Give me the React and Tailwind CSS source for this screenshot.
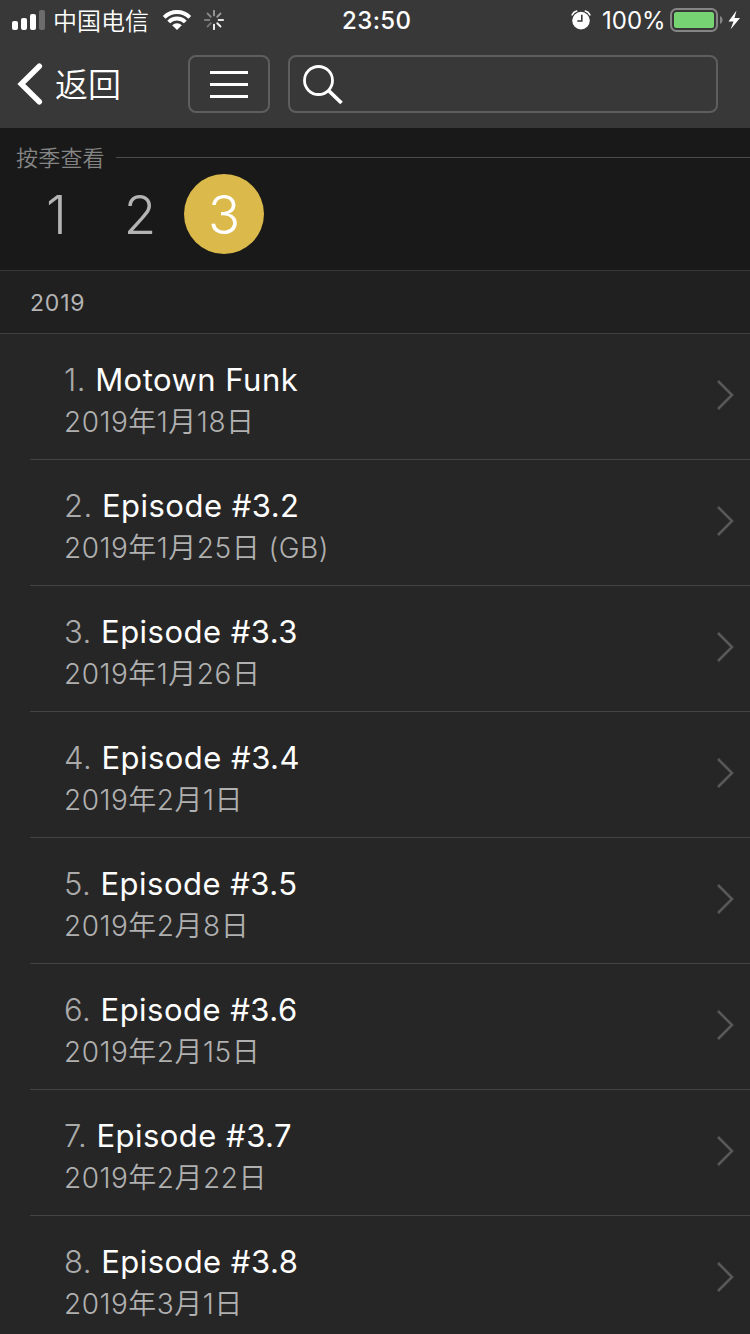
const episodes = [
  { title: 'Motown Funk', date: '2019年1月18日' },
  { title: 'Episode #3.2', date: '2019年1月25日 (GB)' },
  { title: 'Episode #3.3', date: '2019年1月26日' },
  { title: 'Episode #3.4', date: '2019年2月1日' },
  { title: 'Episode #3.5', date: '2019年2月8日' },
  { title: 'Episode #3.6', date: '2019年2月15日' },
  { title: 'Episode #3.7', date: '2019年2月22日' },
  { title: 'Episode #3.8', date: '2019年3月1日' },
];

const spokes = [
  [0, 0.5], [45, 0.5], [90, 0.85], [135, 0.95], [180, 1], [225, 0.3], [270, 0.35], [315, 0.4],
];

function StatusBar() {
  return (
    <div className="flex h-10 items-center text-white">
      <svg className="ml-[12px] shrink-0" width="34" height="20" viewBox="0 0 34 20" fill="#fff">
        <rect x="0" y="11" width="6" height="9" rx="2" />
        <rect x="9" y="8" width="6" height="12" rx="2" />
        <rect x="18" y="4" width="6" height="16" rx="2" />
        <rect x="27" y="0" width="6" height="20" rx="2" fill="#6c6c6c" />
      </svg>
      <span className="ml-[7px] w-[97px] pt-[3px] text-[24px] leading-none font-[350] whitespace-nowrap">中国电信</span>
      <svg className="ml-[12px] shrink-0" width="30" height="22" viewBox="0 0 30 22">
        <g fill="none" stroke="#fff" strokeWidth="3.9">
          <path d="M2.2 8.4a18 18 0 0 1 25.6 0" />
          <path d="M6.7 13a11.6 11.6 0 0 1 16.6 0" />
        </g>
        <path d="M15 21l-4.8-4.7a6.8 6.8 0 0 1 9.6 0z" fill="#fff" />
      </svg>
      <svg className="ml-[12px] shrink-0" width="20" height="20" viewBox="0 0 20 20">
        {spokes.map(([angle, opacity]) => (
          <path key={angle} d="M10 5.4V0.8" stroke="#fff" strokeWidth="1.8" strokeLinecap="round" opacity={opacity} transform={`rotate(${angle} 10 10)`} />
        ))}
      </svg>
      <span className="ml-[118px] w-[70px] pt-[2px] text-[24px] leading-none font-medium tracking-[0.4px]">23:50</span>
      <svg className="ml-[159px] shrink-0" width="20" height="20" viewBox="0 0 20 20">
        <circle cx="10" cy="10.6" r="8.8" fill="#fff" />
        <path d="M1.2 4.8C2 2.8 3.5 1.5 5.6 1M18.8 4.8C18 2.8 16.5 1.5 14.4 1" fill="none" stroke="#fff" strokeWidth="1.7" strokeLinecap="round" />
        <path d="M10.800 4.700V11H6.300" fill="none" stroke="#383838" strokeWidth="1.6" />
      </svg>
      <span className="ml-[11px] w-[64px] pt-[2px] text-[24px] leading-none">100%</span>
      <svg className="ml-[4px] shrink-0" width="72" height="24" viewBox="0 0 72 24">
        <rect x="1" y="1" width="46" height="22" rx="5.500" fill="none" stroke="#858585" strokeWidth="2" />
        <rect x="4" y="4" width="40" height="16" rx="2.500" fill="#76d572" />
        <path d="M50 8c3.500 1.500 3.500 6.500 0 8z" fill="#858585" />
        <path d="M66.500 2.500L58.500 13.500h5l-3 8 9.500-11.500h-5.500z" fill="#fff" />
      </svg>
    </div>
  );
}

function NavBar() {
  return (
    <div className="flex h-[88px] items-start pt-[15px]">
      <div className="flex h-[58px] w-[188px] items-center pl-[17px] text-white">
        <svg className="shrink-0" width="26" height="42" viewBox="0 0 26 42" fill="none" stroke="#fff" strokeWidth="5.500" strokeLinecap="round" strokeLinejoin="miter">
          <path d="M22.300 3.200L4.300 21L22.300 38.800" />
        </svg>
        <span className="ml-[12px] pt-[2px] text-[33px] leading-none font-[350] whitespace-nowrap">返回</span>
      </div>
      <div className="flex h-[58px] w-[82px] items-center justify-center rounded-[8px] border-2 border-[#5e5e5e]">
        <div className="flex w-[38px] flex-col gap-[9px]">
          <div className="h-[3px] bg-white" />
          <div className="h-[3px] bg-white" />
          <div className="h-[3px] bg-white" />
        </div>
      </div>
      <div className="ml-[18px] flex h-[58px] w-[430px] items-center rounded-[8px] border-2 border-[#5e5e5e] pl-[12px]">
        <svg width="42" height="42" viewBox="0 0 42 42" fill="none" stroke="#fff">
          <circle cx="16.500" cy="17.500" r="14" strokeWidth="2.800" />
          <path d="M26.500 27.500L39.500 40" strokeWidth="3.800" />
        </svg>
      </div>
    </div>
  );
}

function Seasons() {
  return (
    <div className="h-[143px] shrink-0 border-b border-[#383838] bg-[#191919]">
      <div className="flex h-[46px] items-center pt-[12px] pl-[16px]">
        <span className="w-[100px] pt-[1px] text-[22px] leading-none font-[350] tracking-[0.2px] text-[#858585]">按季查看</span>
        <div className="h-px flex-1 bg-[#4c4c4c]" />
      </div>
      <div className="flex pl-[24px] text-[53px] font-light text-[#b4b4b4]">
        <div className="flex size-20 items-center justify-center pt-[3px] pr-[15px]">1</div>
        <div className="flex size-20 items-center justify-center pt-[3px] pr-[8px]">2</div>
        <div className="flex size-20 items-center justify-center rounded-full bg-[#dbb94a] pt-[3px] text-white">3</div>
      </div>
    </div>
  );
}

function EpisodeRow({ number, title, date }) {
  return (
    <div className="ml-[30px] flex h-[126px] shrink-0 items-center justify-between border-b border-[#434343] pr-[16px] pl-[34px]">
      <div className="pt-[9px]">
        <div className="text-[31px] leading-[42px] tracking-[0.480px] whitespace-nowrap text-white">
          <span className="font-light text-[#aaaaaa]">{number}.</span> {title}
        </div>
        <div className="text-[28px] leading-[43px] font-[350] tracking-[0.500px] whitespace-nowrap text-[#b0b0b0]">{date}</div>
      </div>
      <svg className="mt-[-3px]" width="18" height="32" viewBox="0 0 18 32" fill="none" stroke="#585858" strokeWidth="2.600">
        <path d="M2 2L16 16L2 30" />
      </svg>
    </div>
  );
}

export default function App() {
  return (
    <div className="flex h-[1334px] w-[750px] flex-col overflow-hidden bg-[#262626] font-['Inter','Noto_Sans_CJK_SC',sans-serif]">
      <header className="h-[128px] shrink-0 bg-[#383838]">
        <StatusBar />
        <NavBar />
      </header>
      <Seasons />
      <div className="flex h-[63px] shrink-0 items-center border-b border-[#414141] bg-[#202020] pt-[2px] pl-[30px] text-[23px] tracking-[0.8px] text-[#b4b4b4]">2019</div>
      <main>
        {episodes.map((episode, index) => (
          <EpisodeRow key={episode.title} number={index + 1} title={episode.title} date={episode.date} />
        ))}
      </main>
    </div>
  );
}
